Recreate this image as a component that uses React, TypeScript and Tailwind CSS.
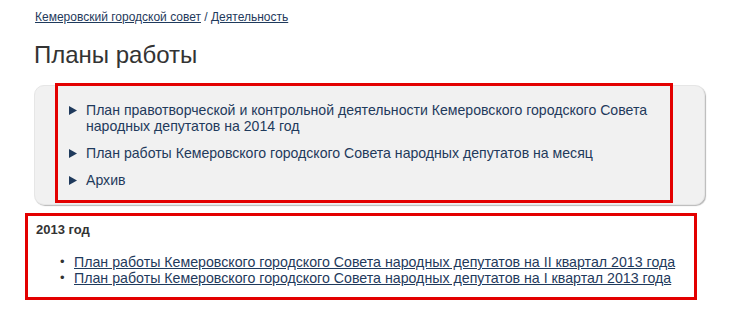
import React from 'react';

const plans = [
  'План правотворческой и контрольной деятельности Кемеровского городского Совета народных депутатов на 2014 год',
  'План работы Кемеровского городского Совета народных депутатов на месяц',
  'Архив',
];

const links2013 = [
  'План работы Кемеровского городского Совета народных депутатов на II квартал 2013 года',
  'План работы Кемеровского городского Совета народных депутатов на I квартал 2013 года',
];

function Arrow() {
  return (
    <svg width="8" height="9" viewBox="0 0 8 9" className="mt-[4px] shrink-0 fill-[#1f3a5c]">
      <path d="M0 0 L8 4.5 L0 9 Z" />
    </svg>
  );
}

export default function App() {
  return (
    <div className="w-[739px] h-[329px] bg-white overflow-hidden font-['Liberation_Sans',Arial,sans-serif] text-[#333]">
      <div className="pl-[35px] pt-[10px] text-[12px] leading-[14px] text-[#1f3a5c]">
        <a href="#" className="underline">Кемеровский городской совет</a>
        <span> / </span>
        <a href="#" className="underline">Деятельность</a>
      </div>

      <h1 className="pl-[34px] mt-[17px] text-[24px] leading-[28px] text-[#333]">Планы работы</h1>

      <div className="relative ml-[34px] mt-[16px] w-[671px] h-[120px] rounded-[10px] bg-[#f1f1f1] border border-[#e6e6e6] shadow-[1px_1px_1px_#b8b8b8] pl-[34px] pr-[34px] pt-[16px]">
        <ul className="flex flex-col gap-[11px]">
          {plans.map((p) => (
            <li key={p} className="flex gap-[9px] text-[14.1px] leading-[16px] text-[#1f3a5c]">
              <Arrow />
              <span>{p}</span>
            </li>
          ))}
        </ul>
        <div className="absolute left-[20px] top-[-3px] w-[618px] h-[120px] border-[3px] border-[#e30000] pointer-events-none" />
      </div>

      <div className="ml-[25px] mt-[8px] w-[672px] h-[87px] border-[3px] border-[#e30000] pl-[8px] pt-[6px]">
        <h3 className="text-[13px] leading-[16px] font-bold text-[#333]">2013 год</h3>
        <ul className="mt-[16px] pl-[24px]">
          {links2013.map((l) => (
            <li key={l} className="flex items-start text-[14.2px] leading-[16px] text-[#1f3a5c]">
              <span className="w-[14px] shrink-0 text-[13px] text-[#333]">•</span>
              <a href="#" className="underline">{l}</a>
            </li>
          ))}
        </ul>
      </div>
    </div>
  );
}
